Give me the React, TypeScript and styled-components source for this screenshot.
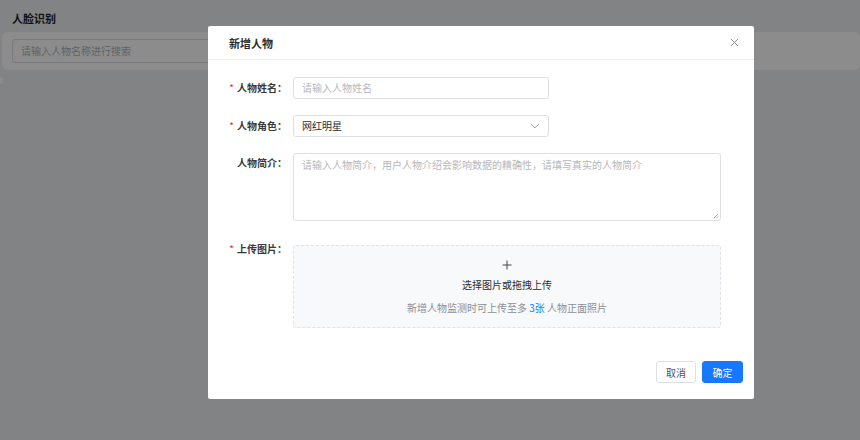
import styled, { createGlobalStyle } from "styled-components";

const GlobalStyle = createGlobalStyle`
  html, body {
    margin: 0;
    padding: 0;
    width: 860px;
    height: 440px;
    overflow: hidden;
    background: #eceef1;
    font-family: "Noto Sans CJK SC", "Noto Sans", sans-serif;
  }
  * { box-sizing: border-box; }
`;

const Page = styled.div`
  position: relative;
  width: 860px;
  height: 440px;
  padding: 10px 0 0 2px;
`;

const PageTitle = styled.h1`
  margin: 0 0 6px 10px;
  font-size: 11px;
  font-weight: 700;
  line-height: 16px;
  color: #222;
`;

const SearchCard = styled.div`
  background: #fff;
  border-radius: 6px;
  height: 38px;
  padding: 7px 10px;
`;

const SearchInput = styled.div`
  width: 320px;
  height: 24px;
  border: 1px solid #dcdfe6;
  border-radius: 3px;
  padding-left: 8px;
  font-size: 10px;
  line-height: 22px;
  color: #b0b3b8;
`;

const Stub = styled.div`
  margin: 7px 0 0 -2px;
  width: 3px;
  height: 7px;
  background: #fff;
  border-radius: 0 3px 3px 0;
`;

const Overlay = styled.div`
  position: absolute;
  inset: 0;
  background: rgba(0, 0, 0, 0.45);
`;

const Modal = styled.div`
  position: absolute;
  left: 208px;
  top: 26px;
  width: 546px;
  height: 373px;
  background: #fff;
  border-radius: 2px;
  display: flex;
  flex-direction: column;
`;

const Header = styled.div`
  height: 34px;
  padding: 0 14px 0 21px;
  border-bottom: 1px solid #eeeff2;
  display: flex;
  align-items: center;
  justify-content: space-between;
`;

const Title = styled.div`
  font-size: 11px;
  font-weight: 600;
  color: #2b2b2b;
`;

const Close = styled.button`
  border: none;
  background: none;
  padding: 0;
  width: 12px;
  height: 12px;
  display: flex;
  align-items: center;
  justify-content: center;
  cursor: pointer;
`;

const Body = styled.div`
  flex: 1;
  padding-top: 17px;
`;

const Row = styled.div<{ $gap: number }>`
  display: grid;
  grid-template-columns: 85px 1fr;
  margin-bottom: ${(p) => p.$gap}px;
`;

const Label = styled.label<{ $required?: boolean; $top?: number }>`
  display: flex;
  justify-content: flex-end;
  align-items: ${(p) => (p.$top !== undefined ? "flex-start" : "center")};
  padding-right: 6px;
  margin-top: ${(p) => p.$top ?? 0}px;
  font-size: 10px;
  font-weight: 600;
  color: #3a3a3a;
  line-height: 18px;
  &::before {
    content: ${(p) => (p.$required ? '"*"' : '""')};
    color: #f5222d;
    margin-right: 3px;
    font-weight: 400;
  }
`;

const Input = styled.div<{ $placeholder?: boolean }>`
  width: 256px;
  height: 22px;
  border: 1px solid #dcdfe6;
  border-radius: 3px;
  padding: 0 8px;
  font-size: 10px;
  line-height: 20px;
  color: ${(p) => (p.$placeholder ? "#b4b7bd" : "#2b2b2b")};
  display: flex;
  align-items: center;
  justify-content: space-between;
`;

const TextArea = styled.div`
  position: relative;
  width: 428px;
  height: 68px;
  border: 1px solid #dcdfe6;
  border-radius: 3px;
  padding: 4px 8px;
  font-size: 10px;
  line-height: 14px;
  color: #b4b7bd;
`;

const Grip = styled.svg`
  position: absolute;
  right: 1px;
  bottom: 1px;
`;

const Upload = styled.div`
  width: 428px;
  height: 83px;
  border: 1px dashed #dfe2e8;
  border-radius: 3px;
  background: #f8f9fb;
  display: flex;
  flex-direction: column;
  align-items: center;
  padding-top: 14px;
`;

const UploadMain = styled.div`
  margin-top: 8px;
  font-size: 10px;
  color: #2b2b2b;
  line-height: 14px;
`;

const UploadHint = styled.div`
  margin-top: 9px;
  font-size: 10px;
  color: #8a8e95;
  line-height: 14px;
  span {
    color: #1677ff;
  }
`;

const Footer = styled.div`
  display: flex;
  justify-content: flex-end;
  gap: 6px;
  padding: 0 11px 16px 0;
`;

const Button = styled.button<{ $primary?: boolean }>`
  width: ${(p) => (p.$primary ? "41px" : "40px")};
  height: 22px;
  padding: 0;
  border-radius: 3px;
  font-family: inherit;
  font-size: 10px;
  border: 1px solid ${(p) => (p.$primary ? "#1677ff" : "#dcdfe6")};
  background: ${(p) => (p.$primary ? "#1677ff" : "#fff")};
  color: ${(p) => (p.$primary ? "#fff" : "#555")};
  cursor: pointer;
`;

export default function App() {
  return (
    <>
      <GlobalStyle />
      <Page>
        <PageTitle>人脸识别</PageTitle>
        <SearchCard>
          <SearchInput>请输入人物名称进行搜索</SearchInput>
        </SearchCard>
        <Stub />
        <Overlay />
        <Modal>
          <Header>
            <Title>新增人物</Title>
            <Close aria-label="close">
              <svg width="9" height="9" viewBox="0 0 9 9">
                <path d="M1 1 L8 8 M8 1 L1 8" stroke="#8c8c8c" strokeWidth="1" />
              </svg>
            </Close>
          </Header>
          <Body>
            <Row $gap={16}>
              <Label $required>人物姓名：</Label>
              <Input $placeholder>请输入人物姓名</Input>
            </Row>
            <Row $gap={16}>
              <Label $required>人物角色：</Label>
              <Input>
                网红明星
                <svg width="10" height="6" viewBox="0 0 10 6">
                  <path d="M1 1 L5 5 L9 1" fill="none" stroke="#aaa" strokeWidth="1" />
                </svg>
              </Input>
            </Row>
            <Row $gap={24}>
              <Label $top={1}>人物简介：</Label>
              <TextArea>
                请输入人物简介，用户人物介绍会影响数据的精确性，请填写真实的人物简介
                <Grip width="6" height="6" viewBox="0 0 6 6">
                  <path d="M5 1 L1 5 M5 3.5 L3.5 5" stroke="#999" strokeWidth="0.8" />
                </Grip>
              </TextArea>
            </Row>
            <Row $gap={0}>
              <Label $required $top={-5}>上传图片：</Label>
              <Upload>
                <svg width="10" height="10" viewBox="0 0 10 10">
                  <path d="M5 0.5 V9.5 M0.5 5 H9.5" stroke="#444" strokeWidth="1" />
                </svg>
                <UploadMain>选择图片或拖拽上传</UploadMain>
                <UploadHint>
                  新增人物监测时可上传至多 <span>3张</span> 人物正面照片
                </UploadHint>
              </Upload>
            </Row>
          </Body>
          <Footer>
            <Button>取消</Button>
            <Button $primary>确定</Button>
          </Footer>
        </Modal>
      </Page>
    </>
  );
}
